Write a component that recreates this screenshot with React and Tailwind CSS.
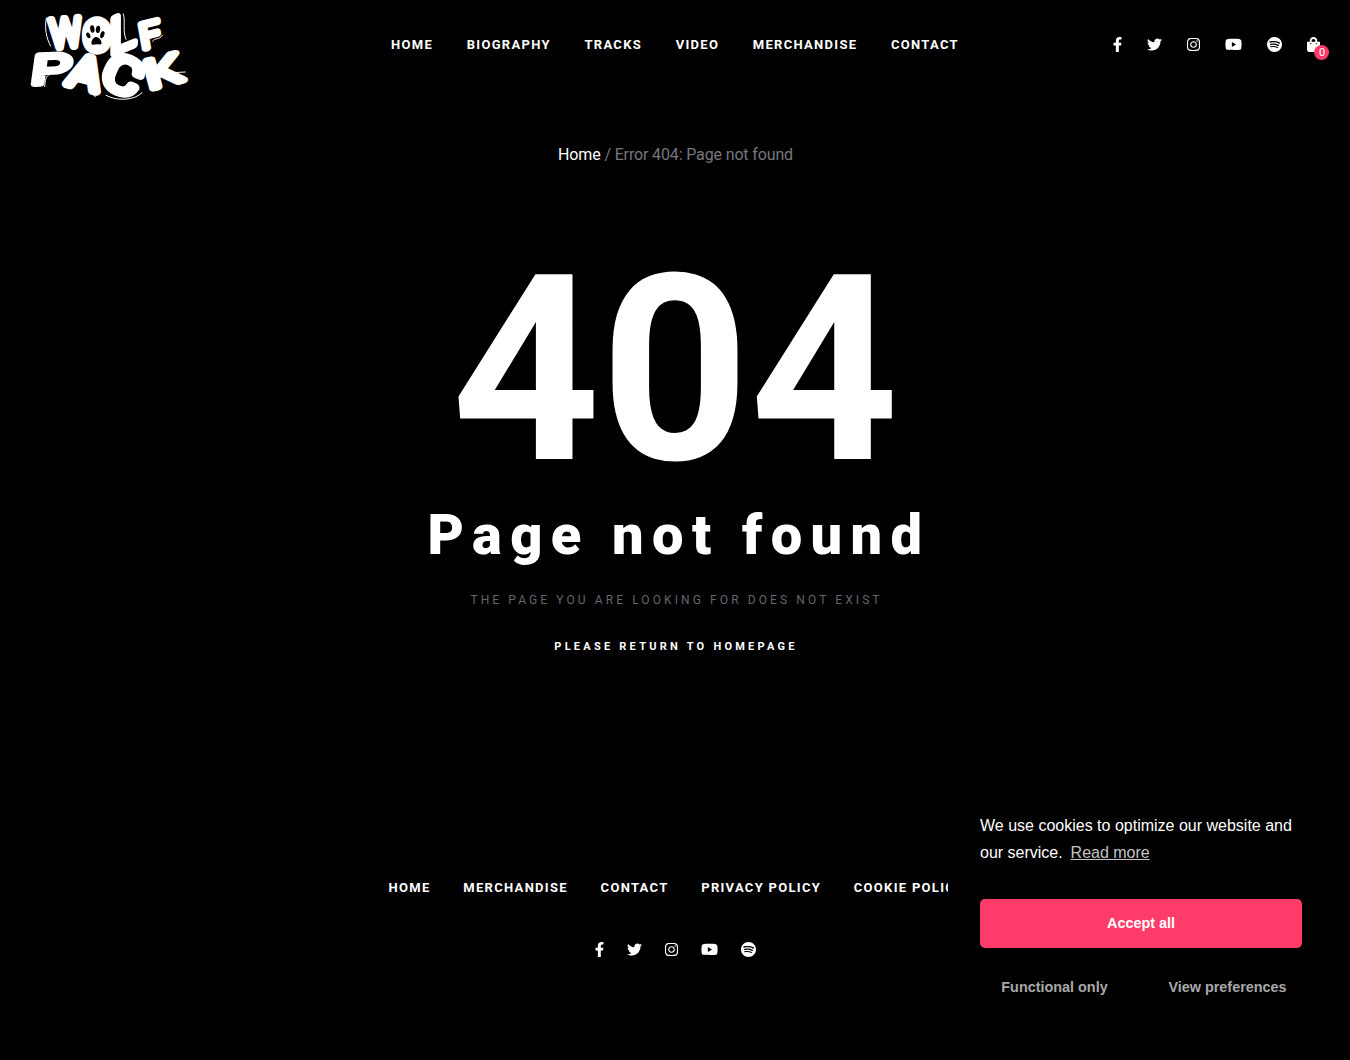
import React from 'react';
import { FaFacebookF, FaTwitter, FaInstagram, FaYoutube, FaSpotify, FaShoppingBag } from 'react-icons/fa';

const headerLinks = ['Home', 'Biography', 'Tracks', 'Video', 'Merchandise', 'Contact'];
const footerLinks = ['Home', 'Merchandise', 'Contact', 'Privacy Policy', 'Cookie Policy'];

const socials = [
  { name: 'Facebook', icon: FaFacebookF, width: 'w-[9px]' },
  { name: 'Twitter', icon: FaTwitter, width: 'w-[15px]' },
  { name: 'Instagram', icon: FaInstagram, width: 'w-[13px]' },
  { name: 'YouTube', icon: FaYoutube, width: 'w-[17px]' },
  { name: 'Spotify', icon: FaSpotify, width: 'w-[15px]' },
];

// Each letter is stretched and tilted on its own to get the brush look
const logoLetters = [
  { char: 'W', transform: 'translate(94 144) rotate(-5) scale(0.88 1)', size: 118, stroke: 23 },
  { char: 'O', transform: 'translate(192 150) scale(0.96 1)', size: 120, stroke: 28 },
  { char: 'L', transform: 'translate(269 164) skewY(-22) scale(1 1)', size: 146, stroke: 23 },
  { char: 'F', transform: 'translate(366 148) rotate(-10) skewY(-4) scale(1.08 1)', size: 104, stroke: 20 },
  { char: 'P', transform: 'translate(30 252) rotate(-2) skewX(-10) scale(1.55 0.98)', size: 122, stroke: 19 },
  { char: 'A', transform: 'translate(138 252) rotate(14) skewX(-2) scale(1.15 1)', size: 132, stroke: 26 },
  { char: 'C', transform: 'translate(236 250) rotate(24) scale(1.26 1.06)', size: 138, stroke: 24 },
  { char: 'K', transform: 'translate(388 268) rotate(-15) scale(1.38 0.95)', size: 124, stroke: 22 },
];

const Logo = () => (
  <svg viewBox="0 0 540 330" className="h-[110px] w-[180px] overflow-visible" aria-label="Wolf Pack">
    <g
      fill="#fff"
      stroke="#fff"
      strokeLinejoin="round"
      fontFamily="Roboto, sans-serif"
      fontWeight="300"
    >
      {logoLetters.map(({ char, transform, size, stroke }) => (
        <text key={char} transform={transform} fontSize={size} strokeWidth={stroke}>
          {char}
        </text>
      ))}
    </g>
    {/* Loose brush lines */}
    <g fill="none" stroke="#fff" strokeWidth="3" strokeLinecap="round">
      <path d="M79 54C73 82 79 116 92 138" />
      <path d="M310 42C317 66 307 92 318 118" />
      <path d="M398 124C402 112 418 122 427 106" />
      <path d="M74 260C77 240 75 228 92 222S130 218 142 208" />
      <path d="M204 240C210 256 208 280 226 290" />
      <path d="M258 286C290 304 344 302 366 278" />
      <path d="M438 186C430 206 444 217 460 218L496 216" />
    </g>
    {/* Paw print */}
    <ellipse cx="229" cy="104" rx="32" ry="42" fill="#fff" />
    <g fill="#000">
      <ellipse cx="217" cy="87" rx="6.5" ry="11" transform="rotate(-8 217 87)" />
      <ellipse cx="234" cy="88" rx="6.5" ry="11" transform="rotate(8 234 88)" />
      <ellipse cx="205" cy="106" rx="5.5" ry="9" transform="rotate(-28 205 106)" />
      <ellipse cx="247" cy="104" rx="6" ry="11" transform="rotate(18 247 104)" />
      <path d="M214 130C215 118 222 111 229 111S242 118 245 128C244 136 236 133 230 133S216 138 214 130Z" />
    </g>
  </svg>
);

const NavLinks = ({ items, className = '' }) => (
  <nav className={`flex text-[13px] leading-5 font-bold tracking-[1.3px] uppercase ${className}`}>
    {items.map((item) => (
      <a key={item} href="#" className="whitespace-nowrap">
        {item}
      </a>
    ))}
  </nav>
);

const SocialLinks = ({ className = '' }) => (
  <div className={`flex items-center ${className}`}>
    {socials.map(({ name, icon: Icon, width }) => (
      <a key={name} href="#" aria-label={name}>
        <Icon className={`h-[15px] ${width}`} preserveAspectRatio="xMidYMid slice" />
      </a>
    ))}
  </div>
);

const Header = () => (
  <header className="flex h-[110px] items-start justify-between pl-5">
    <div className="w-[371px]">
      <Logo />
    </div>
    <NavLinks items={headerLinks} className="gap-[33.6px] pt-[35px]" />
    <div className="flex w-[391px] justify-end gap-[25px] pt-[37px] pr-[30px]">
      <SocialLinks className="gap-[25px]" />
      <a href="#" className="relative" aria-label="Cart">
        <FaShoppingBag className="h-[15px] w-[13px]" />
        <span className="absolute top-2 left-[7px] flex h-[15px] w-[15px] items-center justify-center rounded-full bg-[#ff3b6a] pl-px text-[11px] leading-none">
          0
        </span>
      </a>
    </div>
  </header>
);

const CookieBanner = () => (
  <div className="fixed right-4 bottom-4 w-[386px] bg-black px-8 pt-6 pb-8 font-['Liberation_Sans',Arial,sans-serif]">
    <p className="text-base leading-[27px]">
      We use cookies to optimize our website and our service.&nbsp;{' '}
      <a href="#" className="-ml-px text-[#c4c4c4] underline">
        Read more
      </a>
    </p>
    <button className="mt-[33px] block h-[49px] w-full rounded-[5px] bg-[#ff3b6a] text-[14.4px] font-bold">
      Accept all
    </button>
    <div className="mt-4 flex text-[14.4px] font-bold text-[#a8a8a8]">
      <button className="h-12 w-[149px]">Functional only</button>
      <button className="ml-6 h-12 w-[149px]">View preferences</button>
    </div>
  </div>
);

const App = () => {
  return (
    <div className="h-[1060px] overflow-hidden bg-black font-[Roboto,sans-serif] text-white">
      <Header />
      <main className="flex flex-col items-center">
        <div className="pt-[33px] pl-px text-base leading-6 tracking-[-0.14px] text-[#77777d]">
          <a href="#" className="text-white">
            Home
          </a>{' '}
          / Error 404: Page not found
        </div>
        <h1 className="mt-[73px] text-[260px] leading-[260px] font-bold">404</h1>
        <h2 className="-mt-px pl-[8px] text-[56px] leading-[72px] font-black tracking-[8.4px]">
          Page not found
        </h2>
        <p className="mt-[19px] pl-[3px] text-xs leading-5 font-normal tracking-[3.1px] text-[#66666b] uppercase">
          The page you are looking for does not exist
        </p>
        <a href="#" className="mt-[27px] pl-[2px] text-[11px] leading-5 font-bold tracking-[3.24px] uppercase">
          Please return to homepage
        </a>
      </main>
      <footer className="flex flex-col items-center pt-[221px]">
        <NavLinks items={footerLinks} className="gap-[32.7px] pl-[3px]" />
        <SocialLinks className="mt-[44px] gap-[23px]" />
      </footer>
      <CookieBanner />
    </div>
  );
};

export default App;
